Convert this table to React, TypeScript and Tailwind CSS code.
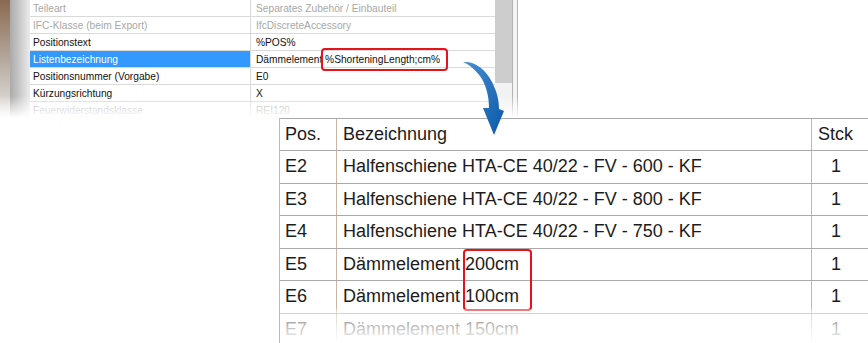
import React from 'react'

type Prop = { label: string; value: string; muted?: boolean; selected?: boolean; marked?: boolean }

const PROPS: Prop[] = [
  { label: 'Teileart', value: 'Separates Zubehör / Einbauteil', muted: true },
  { label: 'IFC-Klasse (beim Export)', value: 'IfcDiscreteAccessory', muted: true },
  { label: 'Positionstext', value: '%POS%' },
  { label: 'Listenbezeichnung', value: '%ShorteningLength;cm%', selected: true, marked: true },
  { label: 'Positionsnummer (Vorgabe)', value: 'E0' },
  { label: 'Kürzungsrichtung', value: 'X' },
  { label: 'Feuerwiderstandsklasse', value: 'REI120', muted: true },
]

const ROWS = [
  { pos: 'E2', name: 'Halfenschiene HTA-CE 40/22 - FV - 600 - KF', qty: '1' },
  { pos: 'E3', name: 'Halfenschiene HTA-CE 40/22 - FV - 800 - KF', qty: '1' },
  { pos: 'E4', name: 'Halfenschiene HTA-CE 40/22 - FV - 750 - KF', qty: '1' },
  { pos: 'E5', name: 'Dämmelement 200cm', qty: '1' },
  { pos: 'E6', name: 'Dämmelement 100cm', qty: '1' },
  { pos: 'E7', name: 'Dämmelement 150cm', qty: '1' },
]

function PropertyGrid() {
  return (
    <div className="relative flex h-[118px] w-[520px] shrink-0 overflow-hidden bg-white">
      <div className="w-[10px] bg-gradient-to-b from-[#8a6a50] via-[#b4a89c] to-[#e8e8e8]" />
      <div className="w-[20px] bg-gradient-to-r from-[#aaaaaa] to-[#ececec]" />
      <div className="flex w-[465px] flex-col">
        {PROPS.map((p) => (
          <div key={p.label} className="flex h-[17px] shrink-0 border-b border-[#d9d9d9] text-[10.2px] leading-[17px]">
            <div
              className={
                'w-[221px] shrink-0 border-r border-[#d9d9d9] pl-[3px] ' +
                (p.selected ? 'bg-[#3399ff] text-white' : p.muted ? 'text-[#a8a8a8]' : 'text-[#111]')
              }
            >
              {p.label}
            </div>
            <div className={'flex-1 pl-[5px] ' + (p.muted ? 'text-[#a8a8a8]' : 'text-[#111]')}>
              {p.marked ? (
                <>
                  Dämmelement{' '}
                  <span className="relative inline-block">
                    {p.value}
                    <span className="absolute -top-[3px] -bottom-[3px] -left-[4px] -right-[8px] rounded-[4px] border-2 border-[#e3151b]" />
                  </span>
                </>
              ) : (
                p.value
              )}
            </div>
          </div>
        ))}
      </div>
      <div className="flex w-[17px] flex-col">
        <div className="h-[83px] bg-[#cdcdcd]" />
        <div className="flex-1 bg-[#f2f2f2]" />
      </div>
      <div className="w-[6px] border-x border-[#b4b4b4] bg-[#f4f4f4]" />
      <div className="absolute inset-x-0 bottom-0 h-[22px] bg-gradient-to-b from-white/0 to-white" />
    </div>
  )
}

function PartsTable() {
  return (
    <div className="relative ml-[279px] flex-1 overflow-hidden border-l border-[#c9b5a2] text-[18px] text-[#1c1c1c]">
      <div className="flex h-[33px] items-center border-y border-[#a9a9a9]">
        <div className="flex h-full w-[57px] items-center border-r border-[#c9b5a2] pl-[5px]">Pos.</div>
        <div className="flex h-full w-[475px] items-center border-r border-[#c9b5a2] pl-[6px]">Bezeichnung</div>
        <div className="pl-[6px]">Stck</div>
      </div>
      {ROWS.map((r) => (
        <div key={r.pos} className="flex h-[32.5px] items-center border-b border-[#a9a9a9]">
          <div className="flex h-full w-[57px] items-center border-r border-[#c9b5a2] pl-[5px]">{r.pos}</div>
          <div className="flex h-full w-[475px] items-center border-r border-[#c9b5a2] pl-[6px]">{r.name}</div>
          <div className="pl-[19px]">{r.qty}</div>
        </div>
      ))}
      <div className="absolute left-[183px] top-[131px] h-[62px] w-[69px] rounded-[4px] border-2 border-[#e3151b]" />
      <div className="absolute inset-x-0 bottom-0 h-[34px] bg-gradient-to-b from-white/40 to-white" />
    </div>
  )
}

export default function App() {
  return (
    <div className="relative flex h-[343px] w-[868px] flex-col overflow-hidden bg-white font-['Liberation_Sans',Arial,sans-serif]">
      <PropertyGrid />
      <PartsTable />
      <svg className="pointer-events-none absolute left-0 top-0" width="868" height="343" viewBox="0 0 868 343">
        <defs>
          <linearGradient id="arrowFill" x1="0" y1="0" x2="1" y2="1">
            <stop offset="0" stopColor="#4a8fd2" />
            <stop offset="1" stopColor="#0a58a8" />
          </linearGradient>
        </defs>
        <path
          d="M463,62 C474,61 485,68 492,82 C497,92 499,100 499,109 L504,111 L494,135 L483,108 L489,108 C489,98 487,88 482,79 C477,71 470,65 463,62 Z"
          fill="url(#arrowFill)"
        />
      </svg>
    </div>
  )
}
